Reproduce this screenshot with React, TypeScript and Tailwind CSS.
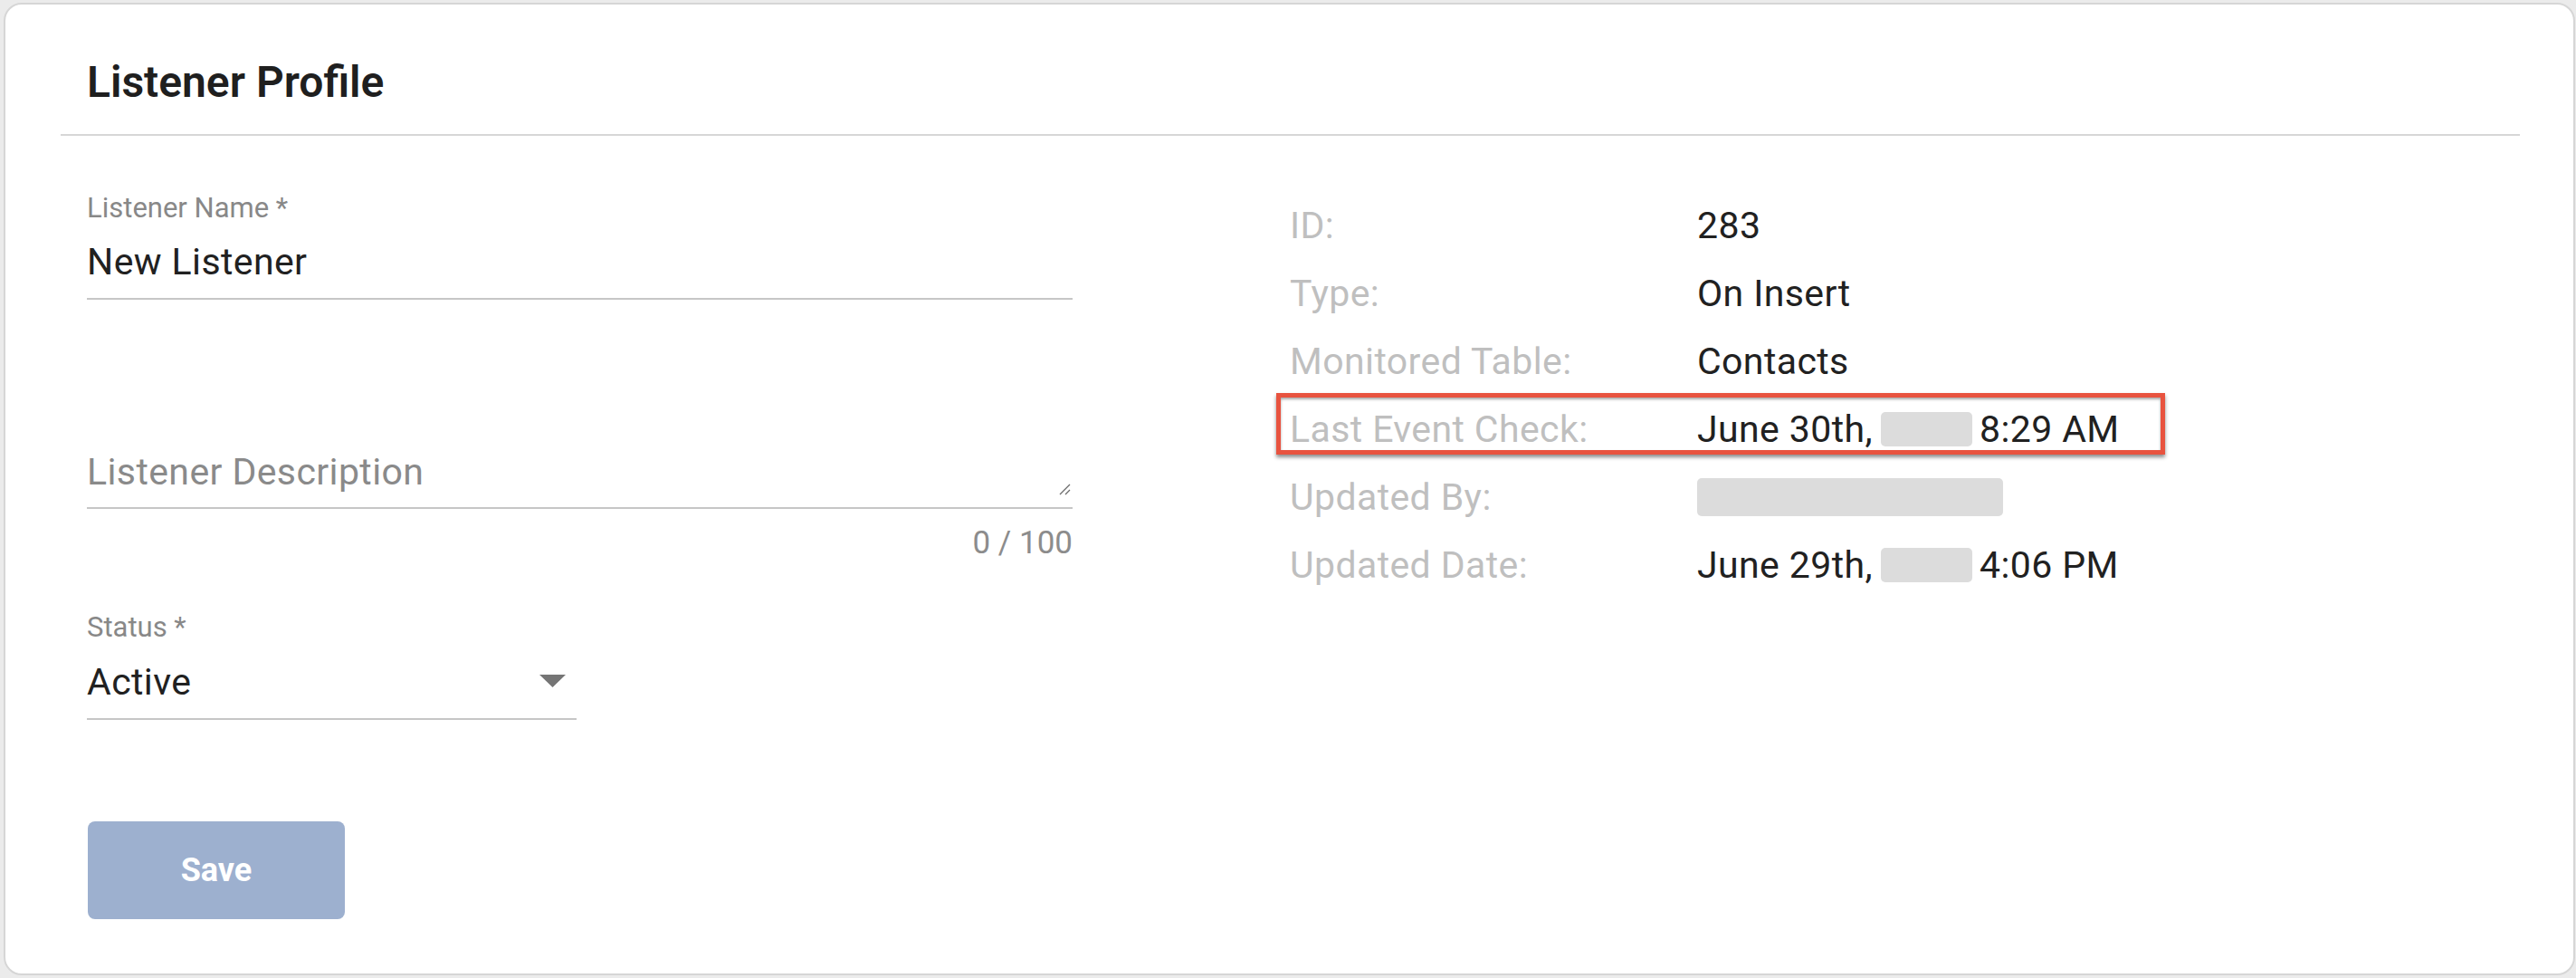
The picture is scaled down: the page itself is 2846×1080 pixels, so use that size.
import React from "react";

const font = { fontFamily: "Roboto, 'Liberation Sans', sans-serif" };

function Redacted({ className }: { className: string }) {
  return <span className={`inline-block bg-[#dcdcdc] rounded-[5px] align-middle ${className}`} />;
}

function InfoRow({
  label,
  children,
  highlight,
}: {
  label: string;
  children: React.ReactNode;
  highlight?: boolean;
}) {
  return (
    <div className="relative flex items-center h-[75px]">
      <div className="w-[450px] text-[41px] leading-[40px] tracking-[0.4px] text-[#bfbfbf]">{label}</div>
      <div className="flex items-center text-[41px] leading-[40px] tracking-[0.4px] text-[#212121]">{children}</div>
      {highlight && (
        <div className="absolute left-[-15px] top-[-2px] w-[982px] h-[68px] border-[5px] border-[#e8533f] shadow-[0_3px_4px_rgba(0,0,0,0.45),inset_0_2px_3px_rgba(0,0,0,0.35)] pointer-events-none" />
      )}
    </div>
  );
}

export default function App() {
  return (
    <div className="w-full h-[1080px] bg-[#ebebeb] pt-[3px] pl-[4px] pr-[1px]" style={font}>
      <div className="h-[1074px] bg-white border-2 border-[#d6d6d6] rounded-[20px] pl-[61px] pr-[59px] pt-[62px]">
        <h1 className="h-[48px] pl-[29px] text-[48px] leading-[48px] font-semibold text-[#1f1f1f]">
          Listener Profile
        </h1>
        <div className="mt-[33px] h-[2px] bg-[#d6d6d6]" />

        <div className="flex pl-[29px]">
          {/* left: form */}
          <div className="w-[1089px]">
            <div className="mt-[65px]">
              <div className="h-[30px] text-[31px] leading-[30px] text-[#888888]">Listener Name *</div>
              <div className="mt-[24px] h-[40px] text-[41px] leading-[40px] tracking-[0.4px] text-[#212121]">New Listener</div>
              <div className="mt-[20px] h-[2px] bg-[#c6c6c6]" />
            </div>

            <div className="mt-[170px]">
              <div className="flex items-end justify-between h-[40px]">
                <span className="text-[41px] leading-[40px] tracking-[0.4px] text-[#8a8a8a]">Listener Description</span>
                <svg width="16" height="16" viewBox="0 0 16 16" className="mb-[-7px] mr-[1px]">
                  <path d="M14 3 L3 14 M14 9 L9 14" stroke="#6b6b6b" strokeWidth="1.3" />
                </svg>
              </div>
              <div className="mt-[19px] h-[2px] bg-[#c6c6c6]" />
              <div className="mt-[20px] h-[35px] text-right text-[35px] leading-[35px] text-[#8c8c8c]">0 / 100</div>
            </div>

            <div className="mt-[61px] w-[541px]">
              <div className="h-[30px] text-[31px] leading-[30px] text-[#888888]">Status *</div>
              <div className="mt-[25px] h-[40px] flex items-center justify-between">
                <span className="text-[41px] leading-[40px] tracking-[0.4px] text-[#212121]">Active</span>
                <svg width="29" height="14" viewBox="0 0 29 14" className="mr-[12px] mt-[-2px]">
                  <path d="M0 0 H29 L14.5 14 Z" fill="#757575" />
                </svg>
              </div>
              <div className="mt-[20px] h-[2px] bg-[#c6c6c6]" />
            </div>

            <button className="mt-[112px] ml-[1px] w-[284px] h-[108px] rounded-[8px] bg-[#9db0cf] text-white text-[36px] font-bold">
              Save
            </button>
          </div>

          {/* right: details */}
          <div className="ml-[240px] mt-[61px]">
            <InfoRow label="ID:">283</InfoRow>
            <InfoRow label="Type:">On Insert</InfoRow>
            <InfoRow label="Monitored Table:">Contacts</InfoRow>
            <InfoRow label="Last Event Check:" highlight>
              June 30th,
              <Redacted className="w-[101px] h-[38px] ml-[9px] mr-[8px]" />
              8:29 AM
            </InfoRow>
            <InfoRow label="Updated By:">
              <Redacted className="w-[338px] h-[42px]" />
            </InfoRow>
            <InfoRow label="Updated Date:">
              June 29th,
              <Redacted className="w-[101px] h-[38px] ml-[9px] mr-[8px]" />
              4:06 PM
            </InfoRow>
          </div>
        </div>
      </div>
    </div>
  );
}
